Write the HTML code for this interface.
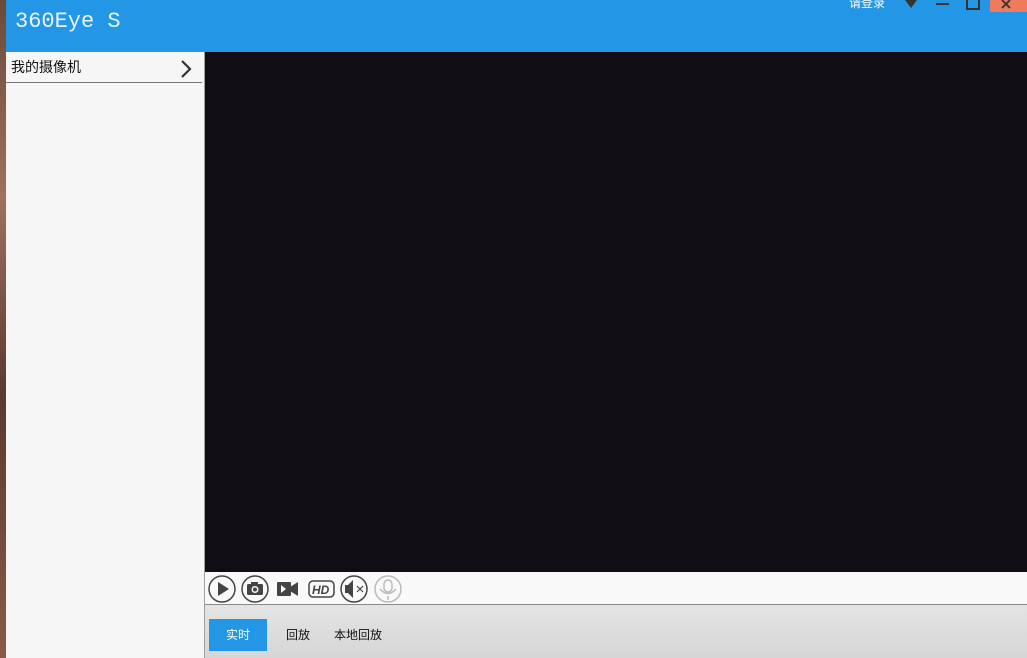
<!DOCTYPE html>
<html><head><meta charset="utf-8"><style>
*{margin:0;padding:0;box-sizing:border-box}
body{width:1027px;height:658px;overflow:hidden;position:relative;background:#f5f5f5;font-family:"Liberation Sans","Noto Sans CJK SC",sans-serif}
.l{position:absolute;left:0;top:0;width:6px;height:658px;background:linear-gradient(#6b4a3a,#a07060 30%,#5a3a30 60%,#8a5a48)}
.hd{position:absolute;left:6px;top:0;width:1021px;height:52px;background:#2397e5}
.t{position:absolute;left:9px;top:9px;font-family:"Liberation Mono",monospace;font-size:22px;color:#eaf4ff}
.sb{position:absolute;left:6px;top:52px;width:199px;height:606px;background:#f6f6f6;border-right:1px solid #a0a0a0}
.sbh{height:31px;border-bottom:1px solid #777;margin-right:2px;font-size:14px;line-height:30px;padding-left:5px;color:#111;position:relative}
.v{position:absolute;left:205px;top:52px;width:822px;height:520px;background:#100e14}
.tb{position:absolute;left:205px;top:572px;width:822px;height:33px;background:#f9f9f9;border-bottom:1px solid #8a8a8a}
.bb{position:absolute;left:205px;top:605px;width:822px;height:53px;background:linear-gradient(#e4e4e4,#d6d6d6)}
.btn{position:absolute;top:14px;height:32px;font-size:12px;line-height:32px;color:#111}
</style></head><body>
<div class="l"></div>
<div class="hd"><div class="t">360Eye S</div>
<div style="position:absolute;left:843px;top:-6px;color:#fff;font-size:12px">请登录</div>
<svg style="position:absolute;left:898px;top:0" width="14" height="10"><path d="M1 0h12L7 8z" fill="#333"/></svg>
<div style="position:absolute;left:930px;top:3px;width:13px;height:2px;background:#333"></div>
<div style="position:absolute;left:960px;top:-2px;width:14px;height:12px;border:2px solid #333;border-top:none"></div>
<div style="position:absolute;left:984px;top:0;width:37px;height:12px;background:#ef7b5c"></div>
<svg style="position:absolute;left:994px;top:0" width="14" height="10"><path d="M2 0L10 8M10 0L2 8" stroke="#333" stroke-width="1.8"/></svg>
</div>
<div class="sb"><div class="sbh">我的摄像机<svg style="position:absolute;left:174px;top:8px" width="12" height="18"><path d="M2 1l8 8-8 8" stroke="#333" stroke-width="2.2" fill="none"/></svg></div></div>
<div class="v"></div>
<div class="tb"><svg width="200" height="33">
<g fill="none" stroke="#444" stroke-width="1.5">
<circle cx="17" cy="17" r="13"/><circle cx="50" cy="17" r="13"/><circle cx="149" cy="17" r="13"/>
<rect x="104" y="9" width="25" height="16" rx="4"/>
<circle cx="183" cy="17" r="13" stroke="#bbb"/>
<rect x="179" y="8" width="8" height="12" rx="4" stroke="#bbb"/>
<path d="M175 17q8 9 16 0M183 24v4" stroke="#bbb"/>
<path d="M152 14l6 6M158 14l-6 6" stroke-width="1.2"/>
</g>
<path d="M13 10v14l11-7z" fill="#444"/>
<rect x="42" y="12" width="16" height="11" rx="1.5" fill="#444"/><rect x="46" y="10" width="7" height="3" fill="#444"/>
<circle cx="50" cy="17.5" r="3.5" fill="#f9f9f9"/><circle cx="50" cy="17.5" r="2" fill="#444"/>
<rect x="72" y="10" width="14" height="14" rx="1" fill="#444"/><path d="M85 15l8-5v14l-8-5z" fill="#444"/><path d="M76 13v8l5-4z" fill="#f9f9f9"/>
<text x="107" y="22" font-family="Liberation Sans" font-style="italic" font-weight="bold" font-size="12" fill="#444">HD</text>
<path d="M140 13h3l5-5v18l-5-5h-3z" fill="#444"/>
</svg></div>
<div class="bb">
<div class="btn" style="left:4px;width:58px;background:#2397e5;color:#fff;text-align:center">实时</div>
<div class="btn" style="left:81px">回放</div>
<div class="btn" style="left:129px">本地回放</div>
</div>
</body></html>
